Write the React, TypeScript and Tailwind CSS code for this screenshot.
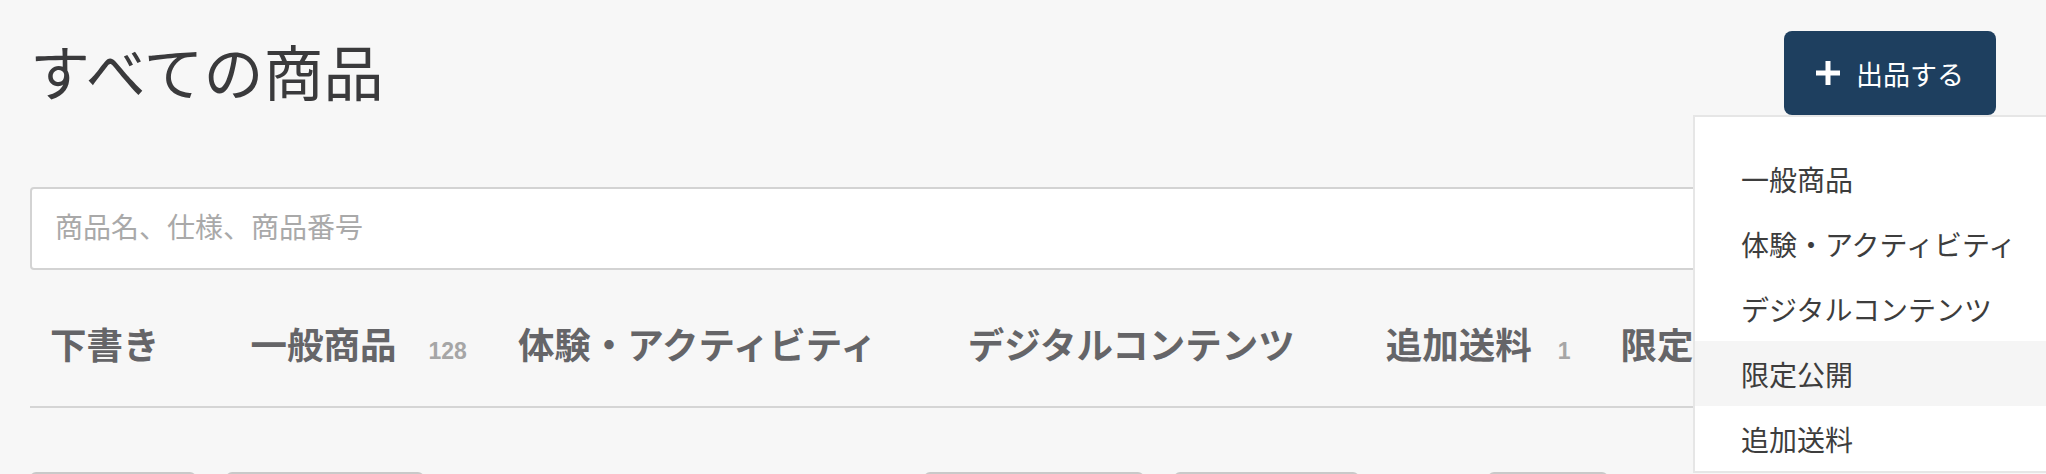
const jp = "font-['Noto_Sans_CJK_JP',sans-serif]";

const tabs = [
  { label: '下書き' },
  { label: '一般商品', count: 128 },
  { label: '体験・アクティビティ' },
  { label: 'デジタルコンテンツ' },
  { label: '追加送料', count: 1 },
  { label: '限定公開' },
];

const menuItems = ['一般商品', '体験・アクティビティ', 'デジタルコンテンツ', '限定公開', '追加送料'];

export default function App() {
  return (
    <div className={`relative w-[2046px] h-[474px] overflow-hidden bg-[#f7f7f7] ${jp}`}>
      <div className="pl-[30px] pr-[50px] pt-[31px]">
        {/* header */}
        <div className="flex items-center justify-between h-[84px]">
          <h1 className="text-[60px] leading-none font-normal text-[#3a3a3c] pb-[6px]">すべての商品</h1>
          <button className="flex items-center gap-[16px] h-[84px] w-[212px] px-[32px] rounded-[8px] bg-[#1e3f5f] text-white text-[27px]">
            <svg width="24" height="24" viewBox="0 0 24 24" fill="#fff">
              <rect x="9.5" y="0" width="5" height="24" />
              <rect x="0" y="9.5" width="24" height="5" />
            </svg>
            <span className="leading-none">出品する</span>
          </button>
        </div>

        {/* search */}
        <input
          type="text"
          placeholder="商品名、仕様、商品番号"
          className="mt-[72px] block w-full h-[83px] border-2 border-[#d3d3d3] rounded-[4px] bg-white pl-[23px] pb-[5px] text-[28px] text-[#333] placeholder:text-[#a9a9a9] outline-none"
        />

        {/* tabs */}
        <div className="flex items-baseline pt-[56px] pb-[43px] pl-[20px] border-b-2 border-[#d5d5d5] whitespace-nowrap">
          {tabs.map((t, i) => (
            <div
              key={t.label}
              className={`flex items-baseline ${t.count ? (i === 4 ? 'mr-[50px]' : 'mr-[51px]') : 'mr-[91px]'}`}
            >
              <span className="text-[36.5px] leading-[36px] font-bold text-[#656568]">{t.label}</span>
              {t.count && (
                <span
                  className={`${i === 4 ? 'ml-[26px]' : 'ml-[32px]'} text-[23px] leading-none font-bold text-[#a6a6a6] font-['Liberation_Sans',sans-serif]`}
                >
                  {t.count}
                </span>
              )}
            </div>
          ))}
        </div>

        {/* buttons row (cut off) */}
        <div className="flex mt-[64px]">
          <div className="w-[166px] h-[40px] shrink-0 bg-white border-2 border-[#c9c9c9] rounded-[6px]" />
          <div className="ml-[30px] w-[198px] h-[40px] shrink-0 bg-white border-2 border-[#c9c9c9] rounded-[6px]" />
          <div className="ml-[500px] w-[220px] h-[40px] shrink-0 bg-white border-2 border-[#c9c9c9] rounded-[6px]" />
          <div className="ml-[30px] w-[185px] h-[40px] shrink-0 bg-white border-2 border-[#c9c9c9] rounded-[6px]" />
          <div className="ml-[129px] w-[120px] h-[40px] shrink-0 bg-white border-2 border-[#c9c9c9] rounded-[6px]" />
        </div>
      </div>

      {/* dropdown menu */}
      <div className="absolute left-[1693px] top-[115px] w-[420px] bg-white border-2 border-[#e6e6e6] pt-[29px]">
        {menuItems.map((m, i) => (
          <div
            key={m}
            className={`flex items-center h-[65px] pl-[46px] text-[28px] text-[#3d3d3d] ${i === 3 ? 'bg-[#f5f5f5]' : ''}`}
          >
            {m}
          </div>
        ))}
      </div>
    </div>
  );
}
